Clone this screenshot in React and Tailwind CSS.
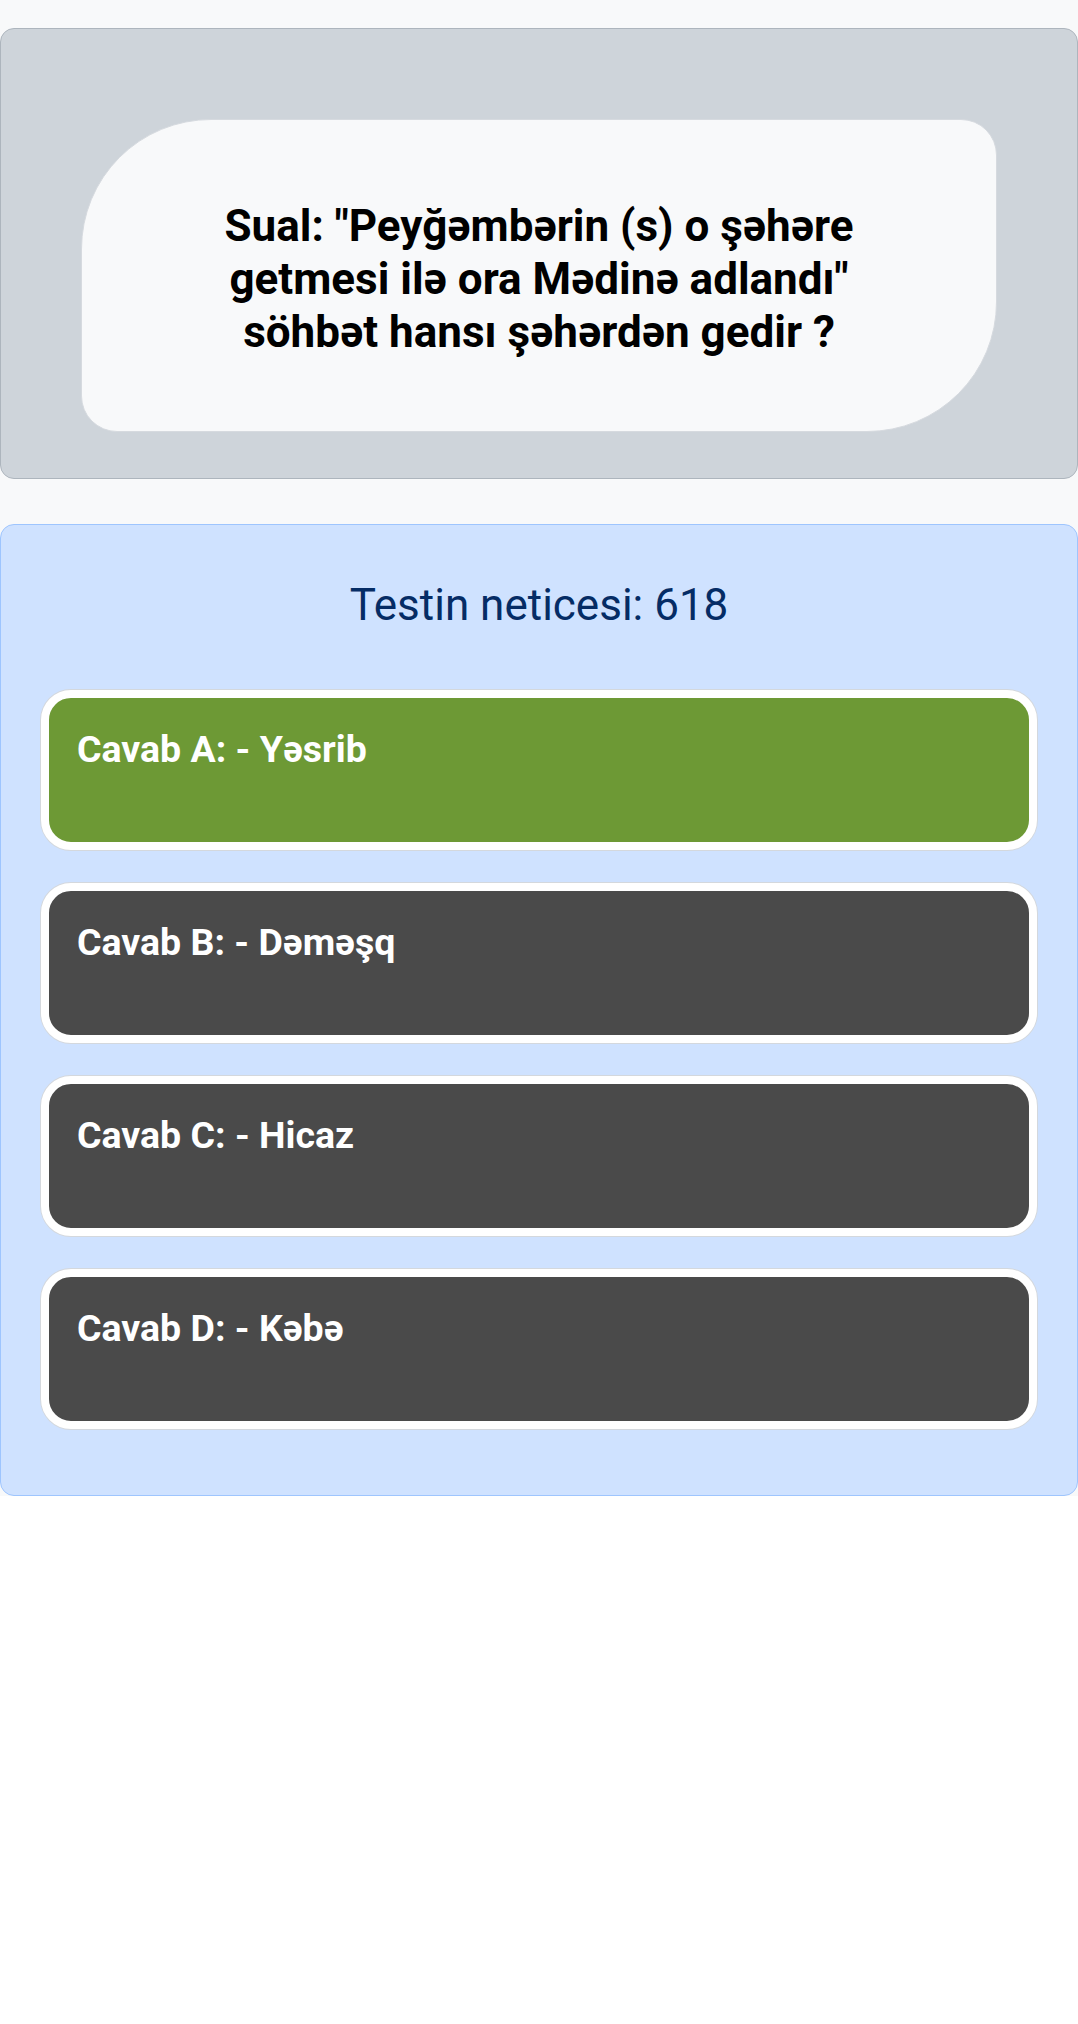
const answers = [
  { label: 'Cavab A: - Yəsrib', correct: true },
  { label: 'Cavab B: - Dəməşq' },
  { label: 'Cavab C: - Hicaz' },
  { label: 'Cavab D: - Kəbə' },
]

export default function App() {
  return (
    <div className="bg-white min-h-screen font-['Roboto',_'Liberation_Sans',_sans-serif]">
      <div className="bg-[#f8f9fa] pt-[28px]">
        {/* question card */}
        <div className="border border-[#adb5bd] rounded-[14px] bg-[#ced4da] pt-[90px] pb-[46px] px-[80px]">
          <div className="h-[313px] border border-[#d6dadf] bg-[#f8f9fa] rounded-[130px_36px_130px_36px] flex items-center justify-center px-[96px] pt-[7px]">
            <h2 className="text-center text-black font-bold text-[44px] leading-[53px]">
              Sual: "Peyğəmbərin (s) o şəhəre getmesi ilə ora Mədinə adlandı" söhbət hansı şəhərdən gedir ?
            </h2>
          </div>
        </div>

        {/* result card */}
        <div className="mt-[45px] border border-[#9ec5fe] rounded-[14px] bg-[#cfe2ff] px-[40px] pt-[54px] pb-[66px]">
          <p className="text-center text-[#052c65] text-[44px] leading-[52px]">Testin neticesi: 618</p>
          <div className="mt-[59px] flex flex-col gap-[33px]">
            {answers.map((a) => (
              <div
                key={a.label}
                className={
                  'h-[160px] border-[8px] border-white rounded-[30px] shadow-[0_0_0_1px_#d4d8dd] pl-[28px] pt-[30px] ' +
                  (a.correct ? 'bg-[#6d9935]' : 'bg-[#4a4a4a]')
                }
              >
                <span className="text-white font-bold text-[37.5px] leading-[43px]">{a.label}</span>
              </div>
            ))}
          </div>
        </div>
      </div>
    </div>
  )
}
